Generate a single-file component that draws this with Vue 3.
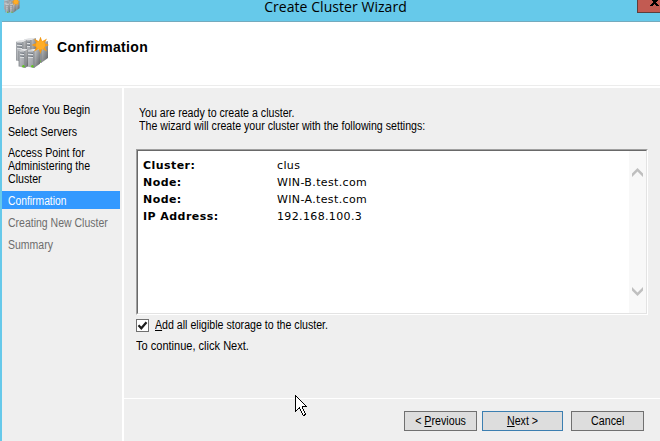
<script setup>
const steps = [
  { label: 'Before You Begin', state: 'done' },
  { label: 'Select Servers', state: 'done' },
  { label: 'Access Point for\nAdministering the\nCluster', state: 'done tall' },
  { label: 'Confirmation', state: 'active' },
  { label: 'Creating New Cluster', state: 'pending' },
  { label: 'Summary', state: 'pending' },
]
const settings = [
  ['Cluster:', 'clus'],
  ['Node:', 'WIN-B.test.com'],
  ['Node:', 'WIN-A.test.com'],
  ['IP Address:', '192.168.100.3'],
]
const towers = [
  { x: 18, y: 4, w: 7, s: 7, h: 22 },
  { x: 8, y: 1, w: 7, s: 5, h: 20 },
  { x: 0, y: 3, w: 7, s: 4, h: 22 },
  { x: 11, y: 12, w: 7, s: 6, h: 19 },
  { x: 3, y: 12, w: 6, s: 3, h: 19 },
]
</script>

<template>
  <div class="window">
    <svg class="defs" width="0" height="0">
      <defs>
        <linearGradient id="front" x1="0" y1="0" x2="1" y2="1">
          <stop offset="0" stop-color="#c9ccd0" />
          <stop offset="1" stop-color="#95989c" />
        </linearGradient>
        <linearGradient id="side" x1="0" y1="0" x2="1" y2="1">
          <stop offset="0" stop-color="#cfd0d2" />
          <stop offset="1" stop-color="#5b5e62" />
        </linearGradient>
        <symbol id="servers" viewBox="0 0 33 33">
          <g v-for="(t, i) in towers" :key="i" :transform="`translate(${t.x} ${t.y})`">
            <path :d="`M0 1.500L${t.s} 0H${t.w + t.s}L${t.w} 2Z`" fill="#e6e7e9" />
            <path :d="`M${t.w} 2L${t.w + t.s} 0V${t.h - t.s * 0.7}L${t.w} ${t.h}Z`" fill="url(#side)" />
            <path :d="`M0 1.500L${t.w} 2V${t.h}L0 ${t.h - 1.5}Z`" fill="url(#front)" />
            <path :d="`M0 2V${t.h - 1.5}M${t.w} 2V${t.h}`" stroke="#6f7378" stroke-width=".7" />
            <path :d="`M1 4L${t.w - 1} 4.300M1 7L${t.w - 1} 7.300`" stroke="#5f6670" stroke-width="1" />
            <path :d="`M1 5.200L${t.w - 1} 5.500M1 8.200L${t.w - 1} 8.500`" stroke="#eef0f1" stroke-width=".8" />
            <circle :cx="t.w - 1.6" :cy="t.h - 1.8" r="1.200" fill="#5fc41f" />
          </g>
          <path d="M24.500 -.5L26.200 4.200L31 1.500L28.800 6L33 8L28.800 10L31 14.500L26.200 12L24.500 17L22.800 12L18 14.500L20.200 10L15.500 8L20.200 6L18 1.500L22.800 4.200Z" fill="#f39b17" />
          <circle cx="24.500" cy="8" r="4.500" fill="#ffad25" />
        </symbol>
      </defs>
    </svg>

    <header class="titlebar">
      <svg class="small-icon" width="16" height="16"><use href="#servers" /></svg>
      <span class="caption">Create Cluster Wizard</span>
      <span class="close">
        <svg width="10" height="6" shape-rendering="crispEdges"><path d="M2 0H8V1H7V2H6V3H7V4H8V5H9V6H6V5H5V4H4V5H3V6H0V5H1V4H2V3H3V1H2Z" fill="#000" /></svg>
      </span>
    </header>

    <div class="banner">
      <svg class="big-icon" width="33" height="33"><use href="#servers" /></svg>
      <h1>Confirmation</h1>
    </div>

    <div class="body">
      <nav>
        <div v-for="s in steps" :key="s.label" class="step" :class="s.state"><span class="narrow">{{ s.label }}</span></div>
      </nav>
      <main>
        <section class="content">
          <p class="intro"><span class="narrow">You are ready to create a cluster.<br />The wizard will create your cluster with the following settings:</span></p>
          <div class="list">
            <div class="rows">
              <div v-for="(r, i) in settings" :key="i" class="row">
                <b>{{ r[0] }}</b><span>{{ r[1] }}</span>
              </div>
            </div>
            <div class="scroll">
              <svg width="11" height="9"><path d="M0 5.500L5.500 0L11 5.500V9L5.500 3.500L0 9Z" fill="#bfbfbf" /></svg>
              <svg width="11" height="9"><path d="M0 3.500L5.500 9L11 3.500V0L5.500 5.500L0 0Z" fill="#bfbfbf" /></svg>
            </div>
          </div>
          <label class="check">
            <span class="box"><svg width="11" height="11"><path d="M1.500 5.300L4.300 8.300L9.500 2.200" fill="none" stroke="#1c1c1c" stroke-width="2.200" /></svg></span>
            <span class="narrow"><u>A</u>dd all eligible storage to the cluster.</span>
          </label>
          <p class="hint"><span class="narrow">To continue, click Next.</span></p>
        </section>
        <footer>
          <button class="prev"><span>&lt; <u>P</u>revious</span></button>
          <button class="next"><span><u>N</u>ext &gt;</span></button>
          <button class="cancel"><span>Cancel</span></button>
        </footer>
      </main>
    </div>

    <svg class="cursor" width="13" height="22" shape-rendering="crispEdges">
      <path d="M.5 .5V16.500L4.500 12.500L7.500 19.500L8.500 20.500L10.500 19.500L7.500 12.500V11.500H11.500Z" fill="#fff" stroke="#000" />
    </svg>
  </div>
</template>

<style>
body { margin: 0; overflow: hidden; }
</style>

<style scoped>
* { box-sizing: border-box; }
.window {
  position: relative; width: 660px; height: 441px; overflow: hidden;
  display: flex; flex-direction: column;
  border-left: 2px solid #66c9ea; background: #fff;
  font: 12px/13px "Liberation Sans", Arial, sans-serif; color: #000;
}
.defs { position: absolute; }
.narrow { display: block; width: max-content; transform: scaleX(.885); transform-origin: 0 0; }
.titlebar {
  height: 22px; flex: none; display: flex; margin-left: -2px; padding-left: 4px;
  justify-content: space-between; align-items: flex-start;
  background: #66c9ea; border-bottom: 1px solid #74aabd;
}
.small-icon { margin-top: -2px; }
.caption { font: 14px/14px "Open Sans", "Noto Sans", sans-serif; letter-spacing: .05px; margin-left: 14px; }
.close {
  width: 23px; height: 13px; background: #c25b52;
  border: 1px solid #5d3e3c; border-width: 0 0 1px 1px; padding-left: 12px;
}
.close svg { display: block; }
.banner { height: 64px; flex: none; display: flex; padding: 15px 0 0 14px; border-bottom: 1px solid #ececec; }
h1 { margin: 2px 0 0 8px; font: bold 14px/16px "Liberation Sans", Arial, sans-serif; letter-spacing: .33px; }
.body { flex: 1; display: flex; gap: 2px; padding-top: 2px; }
nav { width: 120px; flex: none; background: #efefef; padding: 13px 2px 0 0; }
.step { white-space: pre; padding: 3px 0 2px 6px; margin-bottom: 4px; }
.step.tall { padding: 2px 0 2px 6px; }
.step.active { background: #3399ff; color: #fff; padding: 4px 0 1px 6px; margin: -1px 0 5px; }
.step.active .narrow { transform: scaleX(.86); }
.step.pending { color: #6d6d6d; }
.step.pending .narrow { transform: scaleX(.875); }
main { flex: 1; min-width: 0; background: #efefef; display: flex; flex-direction: column; }
.content { height: 311px; border-bottom: 1px solid #fff; padding: 19px 12px 0; }
p { margin: 0; white-space: nowrap; }
.intro { padding-left: 3px; }
.list {
  width: 512px; height: 166px; margin-top: 16px; display: flex; background: #fff;
  border: 1px solid; border-color: #a0a0a0 #fff #fff #a0a0a0;
}
.rows { flex: 1; border: 1px solid; border-color: #696969 transparent #e3e3e3 #696969; border-right: 0; padding: 6px 0 0 5px; }
.row { display: flex; font: 11px/17px "DejaVu Sans", Verdana, sans-serif; letter-spacing: .36px; }
.row b { width: 134px; letter-spacing: .44px; }
.scroll {
  width: 18px; background: #f8f8f8; border: 1px solid #e3e3e3; border-width: 1px 1px 1px 0; border-top-color: #696969;
  display: flex; flex-direction: column; align-items: center; justify-content: space-between; padding: 17px 0;
}
.check { display: flex; gap: 6px; margin-top: 4px; }
.box { width: 13px; height: 13px; border: 1px solid #707070; background: #fff; }
.box svg { display: block; }
.hint { margin-top: 8px; }
.hint .narrow { transform: scaleX(.92); }
u { text-decoration: underline; text-underline-offset: 1px; text-decoration-thickness: 1px; }
footer { display: flex; padding: 12px 0 0 280px; }
button {
  height: 20px; width: 73px; padding: 0; margin: 0 5px 0 0; border: 1px solid #707070; background: #dddddd;
  font: inherit; color: #000; white-space: nowrap;
}
button span { display: inline-block; transform: scaleX(.89); }
.next { width: 81px; border-color: #3c7fb1; margin-right: 8px; }
.cursor { position: absolute; left: 293px; top: 395px; }
</style>
